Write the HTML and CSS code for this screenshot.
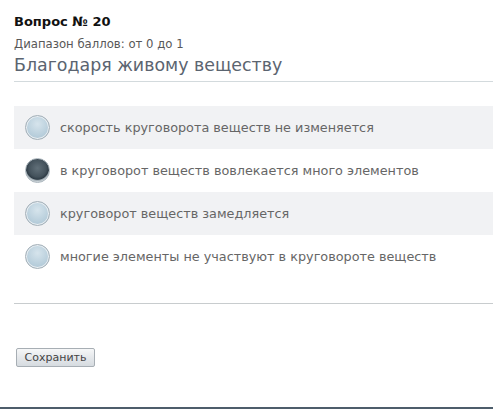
FILE: index.html
```html
<!DOCTYPE html>
<html>
<head>
<meta charset="utf-8">
<link rel="stylesheet" href="styles.css">
</head>
<body>
<div class="page">
  <div class="q-num">Вопрос № 20</div>
  <div class="q-range">Диапазон баллов: от 0 до 1</div>
  <div class="q-title">Благодаря живому веществу</div>
  <div class="options">
    <label class="opt odd"><span class="radio"></span><span class="opt-text">скорость круговорота веществ не изменяется</span></label>
    <label class="opt"><span class="radio checked"></span><span class="opt-text">в круговорот веществ вовлекается много элементов</span></label>
    <label class="opt odd"><span class="radio"></span><span class="opt-text">круговорот веществ замедляется</span></label>
    <label class="opt"><span class="radio"></span><span class="opt-text">многие элементы не участвуют в круговороте веществ</span></label>
  </div>
  <div class="sep"></div>
  <div class="actions"><button class="btn">Сохранить</button></div>
</div>
<div class="footer-line"></div>
</body>
</html>
```
FILE: styles.css
```css
html, body { margin: 0; padding: 0; background: #fff; }
body { font-family: "DejaVu Sans", Verdana, sans-serif; height: 409px; position: relative; overflow: hidden; }
.page { padding: 13px 0 0 14px; }
.q-num { font-weight: bold; font-size: 13px; color: #111; line-height: 18px; }
.q-range { font-size: 11.7px; color: #585858; line-height: 16px; margin-top: 5px; }
.q-title { font-size: 17.4px; color: #5b6470; line-height: 22px; margin-top: 2px; padding-bottom: 5px; border-bottom: 1px solid #d3dadd; }
.options { margin-top: 24px; display: flex; flex-direction: column; }
.opt { display: flex; align-items: center; height: 43px; padding-left: 11px; gap: 10px; }
.opt.odd { background: #f1f2f4; }
.radio { width: 23px; height: 23px; border-radius: 50%; border: 1px solid #a4b0b8; background: radial-gradient(circle at 50% 35%, #d6e4ec 0%, #b9cfdc 60%, #a8c1d0 100%); box-shadow: inset 0 0 0 1px #e8eef2; flex: none; }
.radio.checked { background: radial-gradient(circle at 50% 40%, #617079 0%, #44525c 48%, #2f3c46 62%, #9aa6ad 67%, #dfe5e9 77%, #e9edf0 88%, #b9c3c9 100%); border-color: #a9b4bb; box-shadow: none; }
.opt-text { font-size: 12.8px; color: #666; }
.sep { margin-top: 25px; border-top: 1px solid #c8ccce; }
.actions { margin-top: 42px; padding-left: 2px; }
.btn { font-family: "DejaVu Sans", Verdana, sans-serif; font-size: 11px; color: #444; height: 19px; width: 79px; padding: 0; border: 1px solid #a7aeb4; border-radius: 2px; background: linear-gradient(#f6f7f8, #e5e8eb 50%, #d6dbe0); }
.footer-line { position: absolute; left: 0; right: 0; bottom: 0; height: 2px; background: #4d5d6b; }
```
